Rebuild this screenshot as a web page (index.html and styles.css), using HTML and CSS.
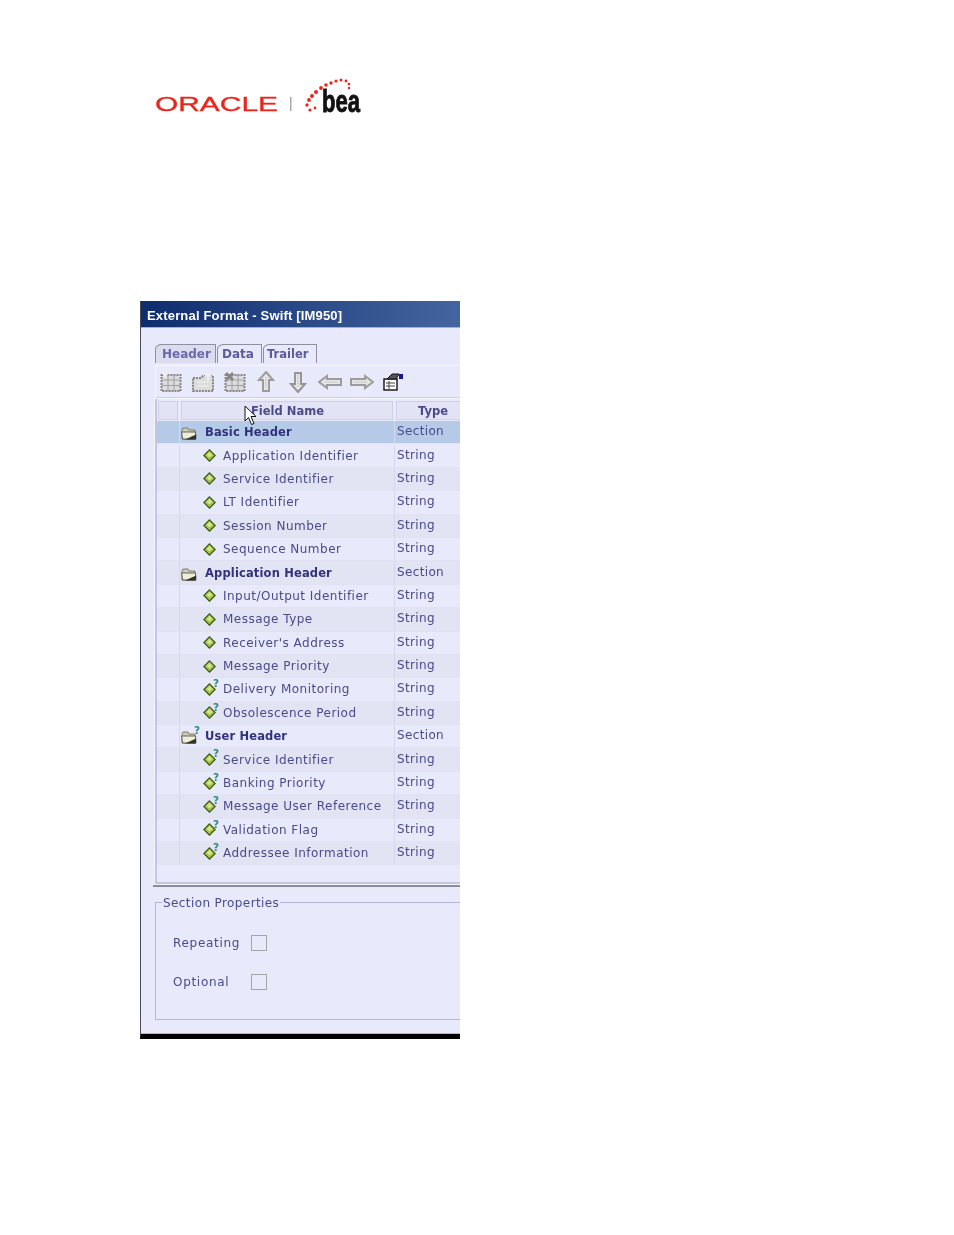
FILE: index.html
```html
<!DOCTYPE html>
<html lang="en">
<head>
    <meta charset="UTF-8">
    <meta name="viewport" content="width=device-width, initial-scale=1.0">
    <title>External Format - Swift [IM950]</title>
    <link rel="stylesheet" href="styles.css">
</head>
<body>
    <svg class="defs" width="0" height="0">
        <defs>
            <symbol id="diamond" viewBox="0 0 13 13">
                <path d="M6.5 .8 L12.2 6.5 L6.5 12.2 L.8 6.5 Z" fill="#a3bf45" stroke="#3a5a1c" stroke-width="1.2"/>
                <path d="M6.5 2.8 L9.5 6 L6.5 8.5 L3.5 6 Z" fill="#d3e48a"/>
            </symbol>
            <symbol id="folder" viewBox="0 0 16 13">
                <path d="M1 3 L2 1 H7 L8 3 H14 V12 H1 Z" fill="#cfcbae" stroke="#666" stroke-width=".8"/>
                <path d="M.6 5 H14.6 L14.6 12 H1.6 Z" fill="#f0edd6" stroke="#444" stroke-width=".8"/>
                <path d="M4 12.4 H15.2 V7.5 Z" fill="#33332a"/>
            </symbol>
            <symbol id="grid-icon" viewBox="0 0 22 20">
                <rect x="1.5" y="3" width="19" height="16" fill="#dcdce0" stroke="#858585" stroke-width="2" stroke-dasharray="2 1"/>
                <path d="M2 8 H20 M2 13.5 H20 M8 3 V19 M14 3 V19" stroke="#a0a0a0" fill="none"/>
            </symbol>
        </defs>
    </svg>

    <div class="page">
        <div class="logo">
            <svg width="280" height="45" viewBox="0 0 280 45">
                <text class="logo-oracle" x="15" y="39" textLength="123" lengthAdjust="spacingAndGlyphs">ORACLE</text>
                <rect x="150" y="25" width="1.5" height="14" fill="#aaa"/>
                <g fill="#e8261c">
                    <circle cx="170" cy="38" r="1.6"/><circle cx="167" cy="33" r="1.7"/><circle cx="169" cy="28" r="1.9"/>
                    <circle cx="172" cy="24" r="2"/><circle cx="176" cy="20" r="2"/><circle cx="181" cy="16" r="1.9"/>
                    <circle cx="186" cy="13" r="1.8"/><circle cx="191" cy="11" r="1.7"/><circle cx="196" cy="9" r="1.6"/>
                    <circle cx="201" cy="8" r="1.5"/><circle cx="206" cy="9" r="1.4"/><circle cx="209" cy="12" r="1.3"/>
                    <circle cx="209" cy="16" r="1.2"/><circle cx="175" cy="36" r="1.4"/>
                </g>
                <text class="logo-bea" x="182" y="40" textLength="38" lengthAdjust="spacingAndGlyphs">bea</text>
            </svg>
        </div>

        <div class="window">
            <div class="titlebar">External Format - Swift [IM950]</div>
            <div class="content">
                <div class="tabs">
                    <div class="tab tab-active">Header</div>
                    <div class="tab tab-data">Data</div>
                    <div class="tab tab-trailer">Trailer</div>
                </div>

                <div class="toolbar">
                    <span class="tool"><svg width="22" height="20"><use href="#grid-icon"/><path d="M5 6 V1 M3 3 L5 1 L7 3" stroke="#f2f2f2" stroke-width="2" fill="none"/></svg></span>
                    <span class="tool"><svg width="22" height="20" viewBox="0 0 22 20"><path d="M1 6 H9 L11 4 H21 V19 H1 Z" fill="#dcdcdc" stroke="#858585" stroke-width="2" stroke-dasharray="2 1"/><path d="M5 10 H17 M5 14 H17" stroke="#f2f2f2"/><path d="M16 9 V2 M13 5 L16 1 L19 5" stroke="#eee" stroke-width="2" fill="none"/></svg></span>
                    <span class="tool"><svg width="22" height="20"><use href="#grid-icon"/><path d="M2 1 L9 8 M9 1 L2 8" stroke="#858585" stroke-width="2.6"/></svg></span>
                    <span class="tool"><svg width="18" height="22" viewBox="0 0 18 22"><path d="M9 1 L16 9 H12 V20 H6 V9 H2 Z" fill="#e6e6e6" stroke="#9c9c9c" stroke-width="2"/><path d="M9 6 V17" stroke="#c8c8c8" stroke-width="1.5" stroke-dasharray="1.5 1"/></svg></span>
                    <span class="tool"><svg width="18" height="22" viewBox="0 0 18 22"><path d="M9 21 L16 13 H12 V2 H6 V13 H2 Z" fill="#e6e6e6" stroke="#959595" stroke-width="2"/><path d="M9 4 V16" stroke="#c8c8c8" stroke-width="1.5" stroke-dasharray="1.5 1"/></svg></span>
                    <span class="tool"><svg width="24" height="16" viewBox="0 0 24 16"><path d="M1 8 L9 2 V5 H23 V11 H9 V14 Z" fill="#e6e6e6" stroke="#9c9c9c" stroke-width="2"/><path d="M7 8 H20" stroke="#c8c8c8" stroke-width="1.5" stroke-dasharray="1.5 1"/></svg></span>
                    <span class="tool"><svg width="24" height="16" viewBox="0 0 24 16"><path d="M23 8 L15 2 V5 H1 V11 H15 V14 Z" fill="#e6e6e6" stroke="#9c9c9c" stroke-width="2"/><path d="M4 8 H17" stroke="#c8c8c8" stroke-width="1.5" stroke-dasharray="1.5 1"/></svg></span>
                    <span class="tool"><svg width="21" height="18" viewBox="0 0 21 18"><rect x="1" y="6" width="13" height="11" fill="#fff" stroke="#111" stroke-width="1.4"/><path d="M3 10 H12 M3 13 H12 M6 8 V16" stroke="#444"/><path d="M4 6 L9 1 H16 L13 6 Z" fill="#555" stroke="#111"/><rect x="16" y="1" width="4" height="5" fill="#15159a"/></svg></span>
                </div>

                <div class="grid">
                    <div class="grid-head">
                        <div class="head-cell head-mark"></div>
                        <div class="head-cell head-name">Field Name</div>
                        <div class="head-cell head-type">Type</div>
                        <svg class="cursor" width="14" height="21" viewBox="0 0 14 21"><path d="M1 1 V16 L4.5 12.5 L7.5 19.5 L10 18.5 L7 11.5 H12 Z" fill="#fff" stroke="#111"/></svg>
                    </div>

                    <div class="row row-section row-selected"><div class="mark"></div><div class="name"><svg class="icon-folder"><use href="#folder"/></svg><span class="section-label">Basic Header</span></div><div class="type">Section</div></div>
                    <div class="row"><div class="mark"></div><div class="name field"><svg class="icon-diamond"><use href="#diamond"/></svg><span class="field-label">Application Identifier</span></div><div class="type">String</div></div>
                    <div class="row"><div class="mark"></div><div class="name field"><svg class="icon-diamond"><use href="#diamond"/></svg><span class="field-label">Service Identifier</span></div><div class="type">String</div></div>
                    <div class="row"><div class="mark"></div><div class="name field"><svg class="icon-diamond"><use href="#diamond"/></svg><span class="field-label">LT Identifier</span></div><div class="type">String</div></div>
                    <div class="row"><div class="mark"></div><div class="name field"><svg class="icon-diamond"><use href="#diamond"/></svg><span class="field-label">Session Number</span></div><div class="type">String</div></div>
                    <div class="row"><div class="mark"></div><div class="name field"><svg class="icon-diamond"><use href="#diamond"/></svg><span class="field-label">Sequence Number</span></div><div class="type">String</div></div>
                    <div class="row row-section"><div class="mark"></div><div class="name"><svg class="icon-folder"><use href="#folder"/></svg><span class="section-label">Application Header</span></div><div class="type">Section</div></div>
                    <div class="row"><div class="mark"></div><div class="name field"><svg class="icon-diamond"><use href="#diamond"/></svg><span class="field-label">Input/Output Identifier</span></div><div class="type">String</div></div>
                    <div class="row"><div class="mark"></div><div class="name field"><svg class="icon-diamond"><use href="#diamond"/></svg><span class="field-label">Message Type</span></div><div class="type">String</div></div>
                    <div class="row"><div class="mark"></div><div class="name field"><svg class="icon-diamond"><use href="#diamond"/></svg><span class="field-label">Receiver's Address</span></div><div class="type">String</div></div>
                    <div class="row"><div class="mark"></div><div class="name field"><svg class="icon-diamond"><use href="#diamond"/></svg><span class="field-label">Message Priority</span></div><div class="type">String</div></div>
                    <div class="row"><div class="mark"></div><div class="name field"><svg class="icon-diamond"><use href="#diamond"/></svg><sup class="opt">?</sup><span class="field-label">Delivery Monitoring</span></div><div class="type">String</div></div>
                    <div class="row"><div class="mark"></div><div class="name field"><svg class="icon-diamond"><use href="#diamond"/></svg><sup class="opt">?</sup><span class="field-label">Obsolescence Period</span></div><div class="type">String</div></div>
                    <div class="row row-section"><div class="mark"></div><div class="name"><svg class="icon-folder"><use href="#folder"/></svg><sup class="opt">?</sup><span class="section-label">User Header</span></div><div class="type">Section</div></div>
                    <div class="row"><div class="mark"></div><div class="name field"><svg class="icon-diamond"><use href="#diamond"/></svg><sup class="opt">?</sup><span class="field-label">Service Identifier</span></div><div class="type">String</div></div>
                    <div class="row"><div class="mark"></div><div class="name field"><svg class="icon-diamond"><use href="#diamond"/></svg><sup class="opt">?</sup><span class="field-label">Banking Priority</span></div><div class="type">String</div></div>
                    <div class="row"><div class="mark"></div><div class="name field"><svg class="icon-diamond"><use href="#diamond"/></svg><sup class="opt">?</sup><span class="field-label">Message User Reference</span></div><div class="type">String</div></div>
                    <div class="row"><div class="mark"></div><div class="name field"><svg class="icon-diamond"><use href="#diamond"/></svg><sup class="opt">?</sup><span class="field-label">Validation Flag</span></div><div class="type">String</div></div>
                    <div class="row"><div class="mark"></div><div class="name field"><svg class="icon-diamond"><use href="#diamond"/></svg><sup class="opt">?</sup><span class="field-label">Addressee Information</span></div><div class="type">String</div></div>
                </div>

                <div class="splitter"></div>

                <div class="props">
                    <div class="props-legend">Section Properties</div>
                    <div class="prop"><span class="prop-label">Repeating</span><span class="checkbox"></span></div>
                    <div class="prop"><span class="prop-label">Optional</span><span class="checkbox"></span></div>
                </div>
            </div>
        </div>
    </div>
</body>
</html>
```

FILE: styles.css
```css
body {
    margin: 0;
    background: white;
    font-family: "DejaVu Sans", Verdana, sans-serif;
    font-size: 12px;
    color: #4a4a8c;
}
.defs {
    position: absolute;
}
.page {
    padding-left: 140px;
    height: 1235px;
    box-sizing: border-box;
}
.logo {
    height: 301px;
    padding-top: 72px;
    box-sizing: border-box;
}
.logo svg {
    display: block;
    filter: blur(0.5px);
}
.logo-oracle {
    font-family: "Liberation Sans", sans-serif;
    font-size: 20px;
    fill: #e8261c;
    stroke: #e8261c;
    stroke-width: 0.3;
}
.logo-bea {
    font-family: "Liberation Sans", sans-serif;
    font-size: 31px;
    font-weight: bold;
    fill: #111;
    stroke: #111;
    stroke-width: .9;
}
.window {
    width: 319px;
    height: 733px;
    border-left: 1px solid #4a4a5a;
    border-bottom: 5px solid #000;
    overflow: hidden;
    background: #e8e9fa;
    filter: blur(0.35px);
}
.titlebar {
    height: 26px;
    line-height: 29px;
    padding-left: 6px;
    background: linear-gradient(to right, #0f2c6e, #44659f);
    border-bottom: 1px solid #a9adcf;
    color: white;
    font-family: "Liberation Sans", sans-serif;
    font-size: 13px;
    font-weight: bold;
    letter-spacing: 0.17px;
}
.content {
    padding-top: 16px;
    height: 706px;
    box-sizing: border-box;
    border-bottom: 1px solid #b4b5d0;
}
.tabs {
    display: flex;
    height: 19px;
    margin-left: 14px;
    gap: 1px;
}
.tab {
    width: 45px;
    box-sizing: border-box;
    border: 1px solid #8f8f9f;
    border-bottom: none;
    border-top-left-radius: 7px 5px;
    padding-left: 4px;
    line-height: 18px;
    font-weight: bold;
    font-size: 12px;
    color: #5a5a9c;
}
.tab-active {
    width: 61px;
    padding-left: 6px;
    background: #dcdcf0;
    color: #6a6aaa;
}
.tab-trailer {
    width: 54px;
    padding-left: 3px;
    font-size: 11.5px;
}
.toolbar {
    display: flex;
    align-items: center;
    height: 31px;
    margin-left: 14px;
    margin-top: 2px;
    border-top: 1px solid #f6f6ff;
    border-left: 1px solid #f6f6ff;
    border-bottom: 1px solid #d0d1e6;
    margin-bottom: 1px;
}
.tool {
    width: 32px;
    display: flex;
    justify-content: center;
    margin-left: -0.25px;
}
.tool:first-child {
    margin-left: -1px;
}
.grid {
    margin-left: 14px;
    height: 485px;
    padding-top: 2px;
    border-left: 2px solid #c4c5e4;
    border-bottom: 2px solid #c4c5e4;
    outline: 1px solid #f6f6ff;
    box-sizing: border-box;
}
.grid-head {
    display: flex;
    height: 19px;
    gap: 3px;
    position: relative;
    padding-left: 1px;
    margin-bottom: 1px;
}
.head-cell {
    box-sizing: border-box;
    height: 19px;
    line-height: 18px;
    background: #e2e3f5;
    border: 1px solid #cfd0e8;
    text-align: center;
    font-weight: bold;
    font-size: 11.5px;
    flex: none;
}
.head-mark {
    width: 20px;
}
.head-name {
    width: 212px;
    padding-left: 1px;
}
.head-type {
    width: 70px;
    text-align: left;
    padding-left: 21px;
}
.cursor {
    position: absolute;
    left: 87px;
    top: 4px;
}
.row {
    display: flex;
    height: 23.4px;
    align-items: center;
    border-bottom: 1px solid #e0e1f2;
    box-sizing: border-box;
    background: #e8e9fa;
    letter-spacing: 0.48px;
}
.row:nth-child(even) {
    background: #e2e3f3;
}
.row.row-selected {
    background: #b5cae6;
}
.mark {
    width: 22px;
    align-self: stretch;
    border-right: 1px solid #d6d7ec;
    flex: none;
}
.name {
    width: 215px;
    flex: none;
    align-self: stretch;
    display: flex;
    align-items: center;
    border-right: 1px solid #d6d7ec;
    padding-left: 1px;
    box-sizing: border-box;
    position: relative;
}
.field {
    padding-left: 23px;
}
.icon-diamond {
    width: 13px;
    height: 13px;
    flex: none;
}
.icon-folder {
    width: 16px;
    height: 13px;
    flex: none;
    margin-top: 3px;
}
.opt {
    position: absolute;
    font-size: 10.5px;
    font-weight: bold;
    color: #2a8a86;
    line-height: 1;
    top: 0;
    left: 33px;
}
.row-section .opt {
    left: 14px;
}
.field-label {
    margin-left: 7px;
}
.section-label {
    margin-left: 8px;
    font-size: 11.5px;
    font-weight: bold;
    color: #32327c;
    letter-spacing: 0.15px;
}
.type {
    padding-left: 2px;
    margin-top: -2px;
    letter-spacing: 0.35px;
}
.splitter {
    height: 2px;
    margin-top: 1px;
    margin-left: 12px;
    background: #8c8c98;
}
.props {
    position: relative;
    margin: 15px 0 0 14px;
    height: 118px;
    width: 400px;
    box-sizing: border-box;
    border: 1px solid #b4b5dc;
    padding-top: 32px;
}
.props-legend {
    position: absolute;
    top: -7px;
    left: 6px;
    padding: 0 1px;
    background: #e8e9fa;
    letter-spacing: 0.4px;
}
.prop {
    display: flex;
    align-items: center;
    height: 16px;
    margin-bottom: 22.5px;
    padding-left: 17px;
    letter-spacing: 0.7px;
}
.prop-label {
    width: 78px;
}
.checkbox {
    width: 14px;
    height: 14px;
    border: 1px solid #a6a6a6;
    flex: none;
}
```
